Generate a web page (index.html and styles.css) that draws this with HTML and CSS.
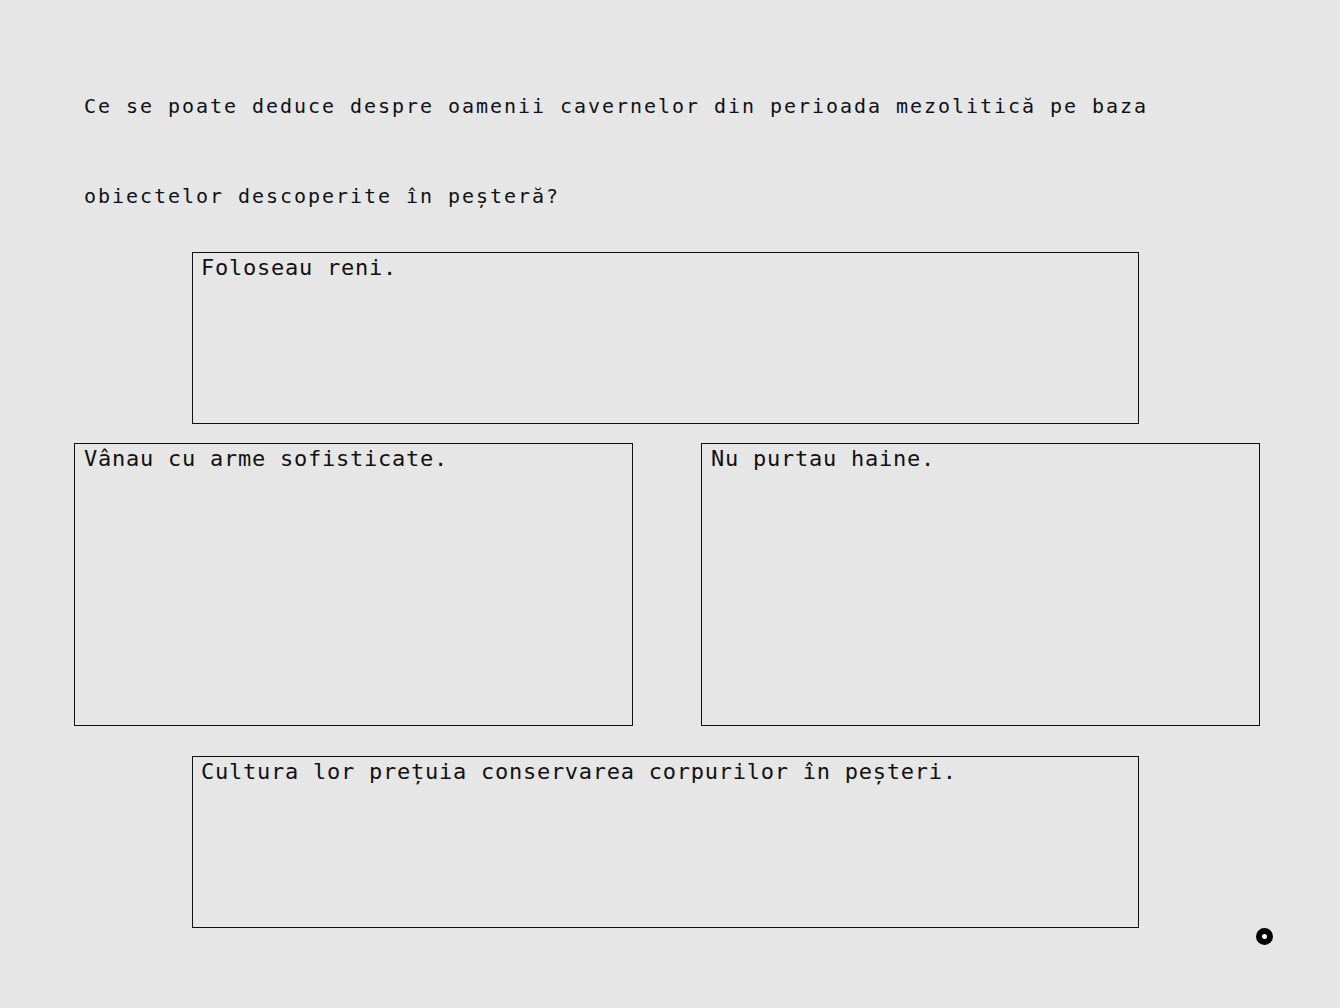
FILE: index.html
```html
<!DOCTYPE html>
<html lang="ro">
<head>
<meta charset="utf-8">
<link rel="stylesheet" href="styles.css">
</head>
<body>
<main class="page">
  <p class="question">Ce se poate deduce despre oamenii cavernelor din perioada mezolitică pe baza obiectelor descoperite în peșteră?</p>
  <div class="answer answer-wide">Foloseau reni.</div>
  <div class="row">
    <div class="answer answer-half">Vânau cu arme sofisticate.</div>
    <div class="answer answer-half">Nu purtau haine.</div>
  </div>
  <div class="answer answer-wide answer-last">Cultura lor prețuia conservarea corpurilor în peșteri.</div>
</main>
<div class="cursor"></div>
</body>
</html>
```
FILE: styles.css
```css
html, body {
  margin: 0;
  padding: 0;
  background: #e6e6e6;
}
body {
  width: 1340px;
  height: 1008px;
  overflow: hidden;
  position: relative;
  font-family: "DejaVu Sans Mono", "Liberation Mono", monospace;
  color: #111;
}
.page {
  width: 1186px;
  margin-left: 74px;
  padding-top: 61px;
  display: flex;
  flex-direction: column;
  align-items: flex-start;
}
.question {
  align-self: stretch;
  margin: 0 0 11px 0;
  padding: 0 100px 0 10px;
  font-size: 20px;
  line-height: 90px;
  letter-spacing: 1.96px;
}
.answer {
  box-sizing: border-box;
  border: 1px solid #111;
  font-size: 22px;
  line-height: 1.2;
  letter-spacing: 0.75px;
  padding: 2px 8px 1px 8px;
}
.answer-wide {
  width: 947px;
  height: 172px;
  margin-left: 118px;
}
.row {
  align-self: stretch;
  display: flex;
  justify-content: space-between;
  margin: 19px 0 30px 0;
}
.answer-half {
  width: 559px;
  height: 283px;
  padding-left: 9px;
}
.cursor {
  position: absolute;
  left: 1256px;
  top: 928px;
  width: 17px;
  height: 17px;
  box-sizing: border-box;
  border-radius: 50%;
  border: 6px solid #000;
  background: #fff;
}
```
